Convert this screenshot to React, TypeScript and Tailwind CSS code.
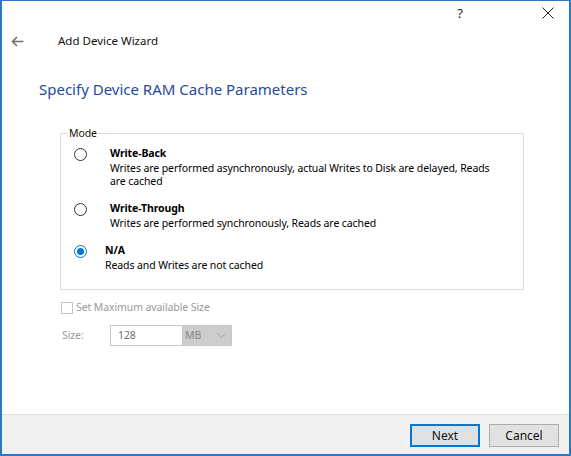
import React from "react";

const font = { fontFamily: '"Noto Sans", "Segoe UI", sans-serif' };

function Radio({ checked }: { checked?: boolean }) {
  return (
    <span
      className={
        "flex h-[13px] w-[13px] shrink-0 items-center justify-center rounded-full border bg-white " +
        (checked ? "border-[#0078d7]" : "border-[#333333]")
      }
    >
      {checked && <span className="h-[7px] w-[7px] rounded-full bg-[#0078d7]" />}
    </span>
  );
}

export default function App() {
  return (
    <div
      className="flex h-[456px] w-[571px] flex-col overflow-hidden border-x-2 border-b-2 border-t border-[#2a78c6] bg-white text-[10.5px] tracking-[-0.1px] text-black"
      style={font}
    >
      {/* title bar */}
      <div className="flex h-[27px] shrink-0 items-center justify-end pb-[3px] pr-[6px]">
        <span className="w-[30px] text-center text-[13px] leading-none text-[#222]">?</span>
        <span className="ml-[58px] flex w-[30px] justify-center">
          <svg width="12" height="12" viewBox="0 0 12 12" fill="none" stroke="#222" strokeWidth="1">
            <path d="M0.5 0.5 L11.5 11.5 M11.5 0.5 L0.5 11.5" />
          </svg>
        </span>
      </div>

      {/* header */}
      <div className="flex h-[26px] shrink-0 items-center">
        <span className="ml-[8px] flex w-[14px] justify-center">
          <svg width="13" height="11" viewBox="0 0 13 11" fill="none" stroke="#707070" strokeWidth="1.6">
            <path d="M12.5 5.5 H1.5 M6 1 L1.5 5.5 L6 10" />
          </svg>
        </span>
        <span className="ml-[34px] text-[11.5px] tracking-normal text-[#111]">Add Device Wizard</span>
      </div>

      {/* heading */}
      <div className="mt-[25px] pl-[37px] text-[15px] leading-[20px] tracking-normal text-[#1f4aa0]">
        Specify Device RAM Cache Parameters
      </div>

      {/* body */}
      <div className="flex flex-1 flex-col pl-[58px] pr-[45px]">
        <fieldset className="mt-[28px] h-[163px] border border-[#dcdcdc] p-0">
          <legend className="ml-[7px] px-[1px] leading-[12px] text-[#111]">Mode</legend>

          <div className="pl-[13px]">
            <div className="mt-[7px] flex items-start">
              <span className="mt-[2px]">
                <Radio />
              </span>
              <div className="ml-[23px] whitespace-nowrap">
                <div className="font-bold leading-[14px]">Write-Back</div>
                <div className="mt-[2px] leading-[13px]">
                  Writes are performed asynchronously, actual Writes to Disk are delayed, Reads
                  <br />
                  are cached
                </div>
              </div>
            </div>

            <div className="mt-[13px] flex items-start">
              <span className="mt-[2px]">
                <Radio />
              </span>
              <div className="ml-[23px] whitespace-nowrap">
                <div className="font-bold leading-[14px]">Write-Through</div>
                <div className="mt-[2px] leading-[13px]">Writes are performed synchronously, Reads are cached</div>
              </div>
            </div>

            <div className="mt-[13px] flex items-start">
              <span className="mt-[2px]">
                <Radio checked />
              </span>
              <div className="ml-[18px] whitespace-nowrap">
                <div className="font-bold leading-[14px]">N/A</div>
                <div className="mt-[2px] leading-[13px]">Reads and Writes are not cached</div>
              </div>
            </div>
          </div>
        </fieldset>

        <div className="ml-[1px] mt-[11px] flex items-center text-[#9a9a9a]">
          <span className="h-[12px] w-[12px] border border-[#c4c4c4] bg-white" />
          <span className="ml-[3px] leading-[13px]">Set Maximum available Size</span>
        </div>

        <div className="ml-[2px] mt-[11px] flex items-center text-[#9a9a9a]">
          <span className="w-[48px]">Size:</span>
          <div className="flex h-[21px]">
            <div className="flex w-[73px] items-center border border-[#c8c8c8] bg-white pl-[7px] text-[#707070]">128</div>
            <div className="flex w-[49px] items-center justify-between border border-l-0 border-[#c8c8c8] bg-[#cccccc] pl-[2px] pr-[5px] text-[#888]">
              <span>MB</span>
              <svg width="9" height="5" viewBox="0 0 9 5" fill="none" stroke="#a8a8a8" strokeWidth="1">
                <path d="M0.5 0.5 L4.5 4.5 L8.5 0.5" />
              </svg>
            </div>
          </div>
        </div>
      </div>

      {/* footer */}
      <div className="flex h-[40px] shrink-0 items-start justify-end gap-[9px] border-t border-[#dfdfdf] bg-[#f0f0f0] pr-[10px] pt-[9px]">
        <button className="h-[23px] w-[70px] border-2 border-[#0078d7] bg-[#e1e1e1] text-[12px] tracking-normal text-[#111]">Next</button>
        <button className="h-[23px] w-[70px] border border-[#adadad] bg-[#e1e1e1] text-[12px] tracking-normal text-[#111]">Cancel</button>
      </div>
    </div>
  );
}
